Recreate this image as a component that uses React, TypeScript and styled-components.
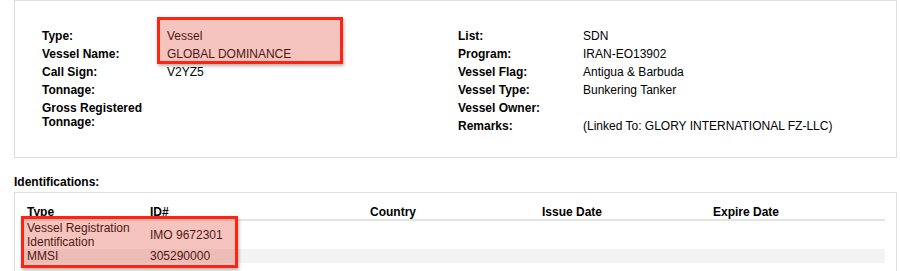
import React from 'react'
import styled, { createGlobalStyle } from 'styled-components'

const GlobalStyle = createGlobalStyle`
  body {
    margin: 0;
    background: #fff;
    font-family: "Liberation Sans", Arial, Helvetica, sans-serif;
    font-size: 12px;
    color: #000;
  }
`

const leftFields: [string, string][] = [
  ['Type:', 'Vessel'],
  ['Vessel Name:', 'GLOBAL DOMINANCE'],
  ['Call Sign:', 'V2YZ5'],
  ['Tonnage:', ''],
  ['Gross Registered Tonnage:', ''],
]

const rightFields: [string, string][] = [
  ['List:', 'SDN'],
  ['Program:', 'IRAN-EO13902'],
  ['Vessel Flag:', 'Antigua & Barbuda'],
  ['Vessel Type:', 'Bunkering Tanker'],
  ['Vessel Owner:', ''],
  ['Remarks:', '(Linked To: GLORY INTERNATIONAL FZ-LLC)'],
]

const identifications = [
  { type: 'Vessel Registration Identification', id: 'IMO 9672301', country: '', issued: '', expires: '' },
  { type: 'MMSI', id: '305290000', country: '', issued: '', expires: '' },
]

const columns = [
  { title: 'Type', width: 123 },
  { title: 'ID#', width: 220 },
  { title: 'Country', width: 172 },
  { title: 'Issue Date', width: 171 },
  { title: 'Expire Date', width: 178 },
]

export default function App() {
  return (
    <>
      <GlobalStyle />
      <Page>
        <DetailsPanel>
          <FieldTable>
            {leftFields.map(([label, value]) => (
              <React.Fragment key={label}>
                <Label>{label}</Label>
                <Value>{value}</Value>
              </React.Fragment>
            ))}
          </FieldTable>
          <FieldTable>
            {rightFields.map(([label, value]) => (
              <React.Fragment key={label}>
                <Label>{label}</Label>
                <Value>{value}</Value>
              </React.Fragment>
            ))}
          </FieldTable>
        </DetailsPanel>

        <SectionTitle>Identifications:</SectionTitle>
        <IdPanel>
          <IdTable>
            <colgroup>
              {columns.map((c) => (
                <col key={c.title} style={{ width: c.width }} />
              ))}
            </colgroup>
            <thead>
              <tr>
                {columns.map((c) => (
                  <HeadCell key={c.title}>{c.title}</HeadCell>
                ))}
              </tr>
            </thead>
            <tbody>
              {identifications.map((row, i) => (
                <BodyRow key={row.id} $striped={i % 2 === 1}>
                  <Cell>{row.type}</Cell>
                  <Cell>{row.id}</Cell>
                  <Cell>{row.country}</Cell>
                  <Cell>{row.issued}</Cell>
                  <Cell>{row.expires}</Cell>
                </BodyRow>
              ))}
            </tbody>
          </IdTable>
        </IdPanel>

        <Highlight $left={157} $top={17} $width={186} $height={47} />
        <Highlight $left={21} $top={216} $width={217} $height={52} />
      </Page>
    </>
  )
}

const Page = styled.div`
  position: relative;
  width: 883px;
  height: 271px;
  padding-left: 14px;
  overflow: hidden;
`

const DetailsPanel = styled.div`
  box-sizing: border-box;
  height: 158px;
  border: 1px solid #dedede;
  padding: 26px 27px 0;
  display: grid;
  grid-template-columns: 416px 1fr;
  align-items: start;
`

const FieldTable = styled.div`
  display: grid;
  grid-template-columns: 125px 1fr;
  align-items: center;
`

const Label = styled.div`
  font-weight: bold;
  line-height: 14px;
  padding: 2px 0;
`

const Value = styled.div`
  line-height: 14px;
  padding: 2px 0;
`

const SectionTitle = styled.div`
  font-weight: bold;
  line-height: 14px;
  margin: 17px 0 3px;
`

const IdPanel = styled.div`
  border: 1px solid #dedede;
  border-bottom: none;
  padding: 12px 11px 20px 6px;
`

const IdTable = styled.table`
  border-collapse: collapse;
  table-layout: fixed;
  width: 864px;
`

const HeadCell = styled.th`
  text-align: left;
  font-weight: bold;
  line-height: 14px;
  padding: 0 6px;
  border-bottom: 2px solid #e4e4e4;
`

const BodyRow = styled.tr<{ $striped: boolean }>`
  background: ${(p) => (p.$striped ? '#f3f3f3' : 'transparent')};
`

const Cell = styled.td`
  line-height: 14px;
  padding: 0 6px;
  vertical-align: middle;
`

const Highlight = styled.div<{ $left: number; $top: number; $width: number; $height: number }>`
  position: absolute;
  box-sizing: border-box;
  left: ${(p) => p.$left}px;
  top: ${(p) => p.$top}px;
  width: ${(p) => p.$width}px;
  height: ${(p) => p.$height}px;
  border: 3px solid #ff2410;
  background: rgba(228, 72, 56, 0.32);
  box-shadow: 1px 2px 3px rgba(0, 0, 0, 0.3);
`
